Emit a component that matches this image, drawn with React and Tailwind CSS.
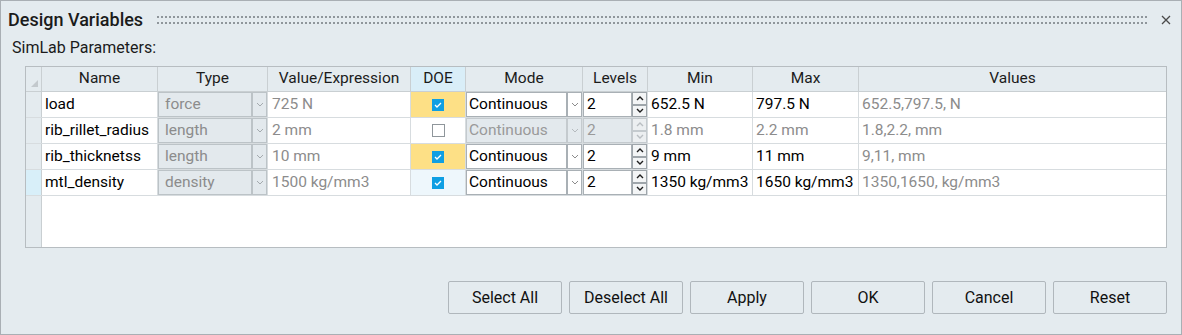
const rows = [
  {
    name: "load",
    type: "force",
    value: "725 N",
    doe: true,
    doeBg: "bg-[#fde086]",
    enabled: true,
    min: "652.5 N",
    max: "797.5 N",
    values: "652.5,797.5, N",
  },
  {
    name: "rib_rillet_radius",
    type: "length",
    value: "2 mm",
    doe: false,
    doeBg: "bg-white",
    enabled: false,
    min: "1.8 mm",
    max: "2.2 mm",
    values: "1.8,2.2, mm",
  },
  {
    name: "rib_thicknetss",
    type: "length",
    value: "10 mm",
    doe: true,
    doeBg: "bg-[#fde086]",
    enabled: true,
    min: "9 mm",
    max: "11 mm",
    values: "9,11, mm",
  },
  {
    name: "mtl_density",
    type: "density",
    value: "1500 kg/mm3",
    doe: true,
    doeBg: "bg-[#eef7fc]",
    enabled: true,
    current: true,
    min: "1350 kg/mm3",
    max: "1650 kg/mm3",
    values: "1350,1650, kg/mm3",
  },
];

const headers = [
  { label: "Name", w: "w-[116px]" },
  { label: "Type", w: "w-[110px]" },
  { label: "Value/Expression", w: "w-[143px]" },
  { label: "DOE", w: "w-[55px]", bg: "bg-[#d9eef8]" },
  { label: "Mode", w: "w-[117px]" },
  { label: "Levels", w: "w-[65px]" },
  { label: "Min", w: "w-[105px]" },
  { label: "Max", w: "w-[106px]" },
  { label: "Values", w: "w-[307px]", last: true },
];

const Chevron = ({ color = "#8c8c8c" }) => (
  <svg width="8" height="5" viewBox="0 0 8 5">
    <path d="M1 1 L4 4 L7 1" fill="none" stroke={color} strokeWidth="1" />
  </svg>
);

const SpinArrow = ({ up, enabled }) => (
  <div
    className={`flex h-1/2 items-center justify-center border ${
      enabled ? "border-[#9ea5aa] bg-[#f3f5f6]" : "border-[#c4cace] bg-[#eceff1]"
    }`}
  >
    <svg width="8" height="5" viewBox="0 0 8 5">
      <path
        d={up ? "M1 4 L4 1 L7 4" : "M1 1 L4 4 L7 1"}
        fill="none"
        stroke={enabled ? "#1e1e1e" : "#b9bec2"}
        strokeWidth="1.4"
      />
    </svg>
  </div>
);

const Checkbox = ({ checked }) =>
  checked ? (
    <div className="flex h-[12px] w-[12px] items-center justify-center bg-[#0f9fe3]">
      <svg width="8" height="6" viewBox="0 0 8 6">
        <path d="M1 3 L3 5 L7 1" fill="none" stroke="white" strokeWidth="1.3" />
      </svg>
    </div>
  ) : (
    <div className="h-[13px] w-[13px] border border-[#8f969b] bg-white" />
  );

const Row = ({ r }) => {
  const gray = "text-[#8c8c8c]";
  const minMax = r.enabled ? "text-black" : gray;
  return (
    <div className="flex h-[26px] border-b border-[#d7dcdf]">
      <div
        className={`w-[16px] border-r border-[#c9cfd2] ${
          r.current ? "bg-[#d8eff9]" : "bg-[#e4ebef]"
        }`}
      />
      <div className="flex w-[116px] items-center border-r border-[#d7dcdf] bg-white pl-[3px]">
        {r.name}
      </div>
      <div className="flex w-[110px] border-r border-[#d7dcdf]">
        <div className={`flex flex-1 items-center border border-[#bcc3c7] bg-[#e3e9ed] pl-[6px] ${gray}`}>
          {r.type}
        </div>
        <div className="flex w-[15px] items-center justify-center border border-[#bcc3c7] bg-[#e3e9ed]">
          <Chevron color="#a4aaae" />
        </div>
      </div>
      <div className={`flex w-[143px] items-center border-r border-[#d7dcdf] bg-white pl-[4px] ${gray}`}>
        {r.value}
      </div>
      <div className={`flex w-[55px] items-center justify-center border-r border-[#d7dcdf] ${r.doeBg}`}>
        <Checkbox checked={r.doe} />
      </div>
      <div className="flex w-[117px] border-r border-[#d7dcdf]">
        <div
          className={`flex flex-1 items-center border pl-[2px] ${
            r.enabled ? "border-[#a9b0b5] bg-white text-black" : "border-[#c4cace] bg-[#e3e9ed] text-[#9a9a9a]"
          }`}
        >
          Continuous
        </div>
        <div
          className={`flex w-[15px] items-center justify-center border ${
            r.enabled ? "border-[#a9b0b5] bg-white" : "border-[#c4cace] bg-[#e3e9ed]"
          }`}
        >
          <Chevron color={r.enabled ? "#8c8c8c" : "#b5babe"} />
        </div>
      </div>
      <div className="flex w-[65px] border-r border-[#d7dcdf]">
        <div
          className={`flex flex-1 items-center border pl-[3px] ${
            r.enabled ? "border-[#a9b0b5] bg-white text-black" : "border-[#c4cace] bg-[#e3e9ed] text-[#9a9a9a]"
          }`}
        >
          2
        </div>
        <div className="flex w-[15px] flex-col">
          <SpinArrow up enabled={r.enabled} />
          <SpinArrow enabled={r.enabled} />
        </div>
      </div>
      <div className={`flex w-[105px] items-center border-r border-[#d7dcdf] bg-white pl-[3px] ${minMax}`}>
        {r.min}
      </div>
      <div className={`flex w-[106px] items-center border-r border-[#d7dcdf] bg-white pl-[3px] ${minMax}`}>
        {r.max}
      </div>
      <div className={`flex w-[307px] items-center bg-white pl-[3px] ${gray}`}>{r.values}</div>
    </div>
  );
};

export default function App() {
  return (
    <div className="flex h-[335px] w-[1182px] flex-col border border-[#a9afb4] bg-[#e4ebef] font-['Roboto','Liberation_Sans',sans-serif] text-[15.5px] text-black">
      <div className="mt-[7px] flex h-[24px] items-center pl-[7px] pr-[10px]">
        <span className="text-[18px] font-medium leading-none text-[#1b1b1b]">Design Variables</span>
        <div className="ml-[14px] flex-1">
          <svg width="100%" height="9" className="block">
            <defs>
              <pattern id="grip" width="4" height="6" patternUnits="userSpaceOnUse">
                <rect x="0" y="0" width="2" height="2" fill="#8f969b" />
              </pattern>
            </defs>
            <rect x="0" y="0" width="100%" height="8" fill="url(#grip)" />
          </svg>
        </div>
        <svg width="10" height="10" viewBox="0 0 10 10" className="ml-[12px]">
          <path d="M1 1 L9 9 M9 1 L1 9" stroke="#4a4a4a" strokeWidth="1.3" />
        </svg>
      </div>

      <div className="mt-[4px] flex h-[24px] items-center pl-[11px] text-[16px] leading-none text-[#1b1b1b]">
        SimLab Parameters:
      </div>

      <div className="ml-[24px] mt-[6px] flex h-[182px] w-[1142px] flex-col border border-[#b7bdc1] bg-white">
        <div className="flex h-[25px] border-b border-[#c9cfd2] bg-[#e4ebef]">
          <div className="relative w-[16px] border-r border-[#c9cfd2]">
            <svg width="8" height="8" viewBox="0 0 8 8" className="absolute bottom-[3px] right-[2px]">
              <path d="M7 0 L7 7 L0 7 Z" fill="#c3c9cd" />
            </svg>
          </div>
          {headers.map((h) => (
            <div
              key={h.label}
              className={`flex items-center justify-center ${h.w} ${h.bg || ""} ${
                h.last ? "" : "border-r border-[#c9cfd2]"
              } text-[#1b1b1b]`}
            >
              {h.label}
            </div>
          ))}
        </div>
        {rows.map((r) => (
          <Row key={r.name} r={r} />
        ))}
        <div className="flex flex-1">
          <div className="w-[16px] border-r border-[#c9cfd2] bg-[#e4ebef]" />
          <div className="flex-1 bg-white" />
        </div>
      </div>

      <div className="mt-[33px] flex justify-end gap-[7px] pr-[14px]">
        {["Select All", "Deselect All", "Apply", "OK", "Cancel", "Reset"].map((b) => (
          <button
            key={b}
            className="flex h-[33px] w-[114px] items-center justify-center rounded-[2px] border border-[#b0b7bc] bg-[#e4ebef] text-[16px] text-[#111]"
          >
            {b}
          </button>
        ))}
      </div>
    </div>
  );
}
